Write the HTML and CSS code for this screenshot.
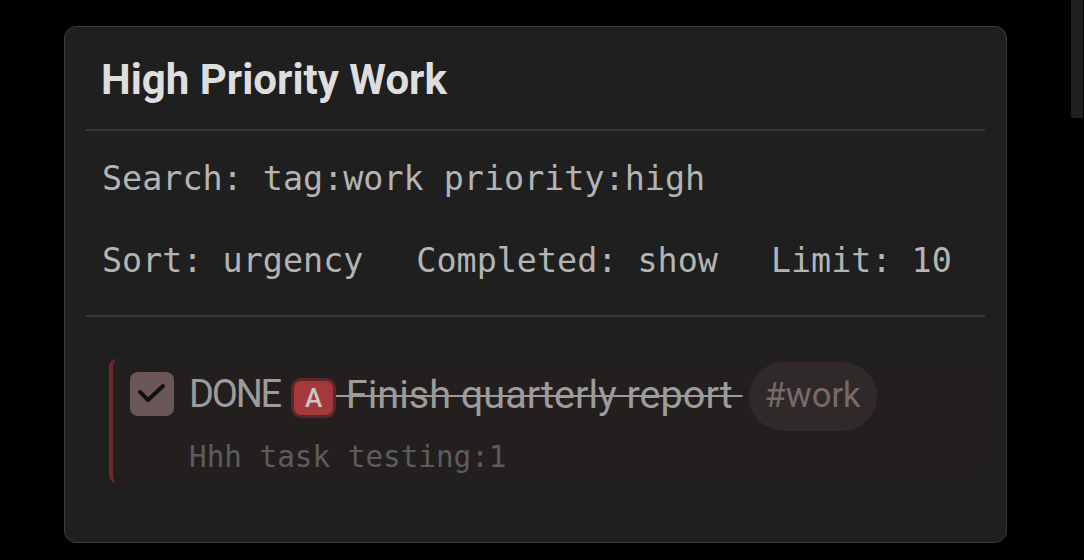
FILE: index.html
```html
<!DOCTYPE html>
<html>
<head>
<meta charset="utf-8">
<link rel="stylesheet" href="styles.css">
</head>
<body>
<div class="scrollbar"></div>
<section class="card">
  <h1 class="title">High Priority Work</h1>
  <div class="divider"></div>
  <div class="query">
    <div class="q-line">Search: tag:work priority:high</div>
    <div class="q-line q-opts">
      <span>Sort: urgency</span>
      <span>Completed: show</span>
      <span>Limit: 10</span>
    </div>
  </div>
  <div class="divider"></div>
  <div class="tasks">
    <div class="task">
      <div class="task-main">
        <span class="check">
          <svg viewBox="0 0 44 44" width="44" height="44"><path d="M10 20l8 8L33 14" fill="none" stroke="#111" stroke-width="4" stroke-linecap="round" stroke-linejoin="round"/></svg>
        </span>
        <span class="state">DONE</span>
        <span class="prio">A</span>
        <span class="desc"> Finish quarterly report </span>
        <span class="tag">#work</span>
      </div>
      <div class="task-meta">Hhh task testing:1</div>
    </div>
  </div>
</section>
</body>
</html>
```
FILE: styles.css
```css
html, body {
  margin: 0;
  padding: 0;
  background: #000;
  width: 1084px;
  height: 560px;
  overflow: hidden;
}
body {
  position: relative;
  font-family: Roboto, "Liberation Sans", sans-serif;
}
.scrollbar {
  position: absolute;
  right: 1px;
  top: 0;
  width: 12px;
  height: 118px;
  background: #1f1f1f;
}
.card {
  box-sizing: border-box;
  margin: 26px 0 0 64px;
  width: 943px;
  height: 517px;
  background: #1f1f1f;
  border: 1px solid #3c3c3c;
  border-radius: 12px;
  padding: 0 21px;
}
.title {
  margin: 0;
  padding: 27px 0 0 15px;
  height: 102px;
  box-sizing: border-box;
  font-size: 42px;
  font-weight: 700;
  color: #dedede;
  line-height: 52px;
}
.divider {
  height: 2px;
  background: #363636;
}
.query {
  padding: 28px 0 34px 16px;
  font-family: "DejaVu Sans Mono", "Liberation Mono", monospace;
  font-size: 33.4px;
  color: #b4b4b4;
}
.q-line {
  line-height: 40px;
  height: 40px;
}
.q-line + .q-line {
  margin-top: 42px;
}
.q-opts {
  display: flex;
  gap: 53px;
}
.tasks {
  padding: 42px 0 0 23px;
}
.task {
  box-sizing: border-box;
  height: 124px;
  background: #231f1f;
  border-left: 4px solid #6e2a2a;
  border-radius: 8px;
  padding: 3px 0 0 16px;
}
.task-main {
  display: flex;
  align-items: center;
  height: 69px;
}
.check {
  width: 44px;
  height: 44px;
  border-radius: 8px;
  background: #6b5757;
  display: flex;
  margin-left: 1px;
  margin-right: 15px;
  margin-top: -5px;
}
.state {
  font-size: 38px;
  letter-spacing: -2.2px;
  color: #9c9c9c;
  margin-right: 11px;
  padding-bottom: 5px;
}
.prio {
  box-sizing: border-box;
  width: 45px;
  height: 40px;
  border-radius: 10px;
  background: #a5383b;
  border: 3px solid #5a2829;
  color: #c8c8c8;
  font-size: 26px;
  font-weight: 500;
  display: flex;
  align-items: center;
  justify-content: center;
  margin-top: 2px;
}
.desc {
  font-size: 39.6px;
  color: #9c9c9c;
  white-space: pre;
  text-decoration: line-through;
  text-decoration-thickness: 2px;
  text-decoration-color: #9c9c9c;
  padding-bottom: 5px;
}
.tag {
  margin-left: 6px;
  background: #302929;
  color: #786a6a;
  font-size: 34.5px;
  border-radius: 35px;
  padding: 0 16px;
  height: 69px;
  line-height: 66px;
}
.task-meta {
  margin-top: 8px;
  padding-left: 60px;
  font-family: "DejaVu Sans Mono", "Liberation Mono", monospace;
  font-size: 29.3px;
  color: #5c5c5c;
  line-height: 36px;
}
```
